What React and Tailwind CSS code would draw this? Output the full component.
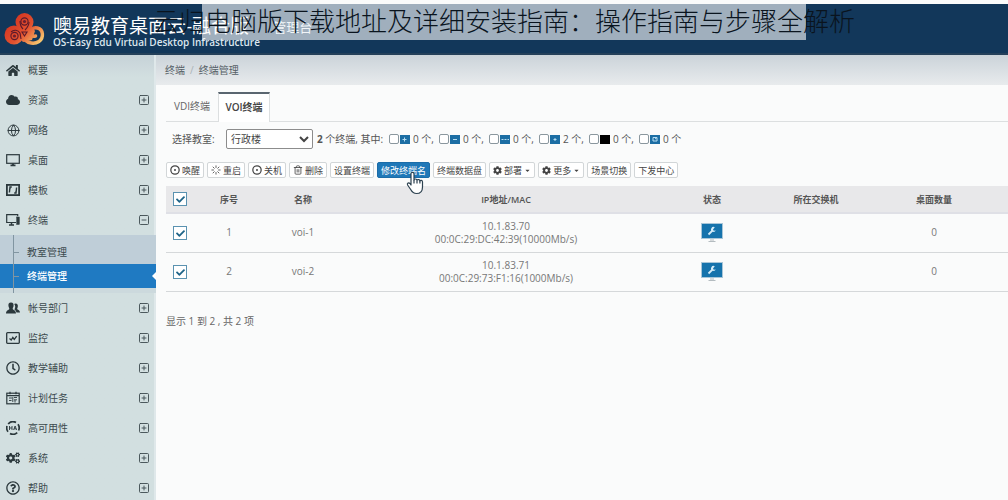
import React, { useState } from "react";
import {
  FaHome,
  FaCloud,
  FaCog,
  FaCogs,
  FaRegClock,
  FaRegQuestionCircle,
  FaCaretDown,
  FaCheck,
} from "react-icons/fa";
import { Globe, Trash2, Loader, CircleDot, SquarePlus, SquareMinus } from "lucide-react";

const cn = (...classes) => classes.filter(Boolean).join(" ");

const DesktopIcon = () => (
  <svg viewBox="0 0 14 14" className="size-3.5" fill="none" stroke="currentColor">
    <rect x="0.7" y="1.7" width="12.6" height="8.6" strokeWidth="1.2" />
    <path d="M4.5 12.3h5M7 10.5v1.5" strokeWidth="1.8" />
  </svg>
);

const TemplateIcon = () => (
  <svg viewBox="0 0 14 14" className="size-3.5" fill="none" stroke="currentColor">
    <rect x="0.9" y="1.9" width="12.2" height="10.2" strokeWidth="1.8" />
    <path d="M5.8 4H4l-.6 5.5M8.2 10H10l.6-5.5M4 4v2M10 10V8" strokeWidth="1.4" />
  </svg>
);

const TerminalIcon = () => (
  <svg viewBox="0 0 14 14" className="size-3.5" fill="none" stroke="currentColor">
    <path d="M10 9.5H0.7V1.7h11v1.5" strokeWidth="1.2" />
    <path d="M3 12h5M5.500 9.500V12" strokeWidth="1.5" />
    <rect x="10.7" y="4" width="2.6" height="7.5" fill="currentColor" strokeWidth="0.5" />
  </svg>
);

const UsersIcon = () => (
  <svg viewBox="0 0 14 14" className="size-3.5" fill="currentColor">
    <path d="M9.5 2.5c2 0 2.6 1.5 2.3 3.300-.2 1-.6 1.5-.6 2.200 0 .8 2.800 1 2.800 3.500h-3.500C10 9.500 8.500 9 8.500 8.300c1-1.500 1-4-.3-5.300.3-.3.700-.5 1.300-.5z" />
    <path d="M5 1.500c2.200 0 2.900 1.700 2.500 3.700-.2 1.200-.8 1.600-.8 2.600 0 1.200 3.300 1.400 3.300 4.700H0c0-3.300 3.300-3.500 3.300-4.700 0-1-.6-1.400-.8-2.600C2.100 3.200 2.800 1.500 5 1.500z" />
  </svg>
);

const MonitorIcon = () => (
  <svg viewBox="0 0 14 14" className="size-3.5" fill="none" stroke="currentColor">
    <rect x="0.7" y="1.7" width="12.6" height="10.6" rx="0.8" strokeWidth="1.3" />
    <path d="M3.500 7.500l1.700 1.500 1.600-2.500 1.500 2 2.400-3.300" strokeWidth="1.3" />
  </svg>
);

const PlanIcon = () => (
  <svg viewBox="0 0 14 14" className="size-3.5" fill="none" stroke="currentColor">
    <rect x="0.8" y="2.2" width="12.4" height="10.6" strokeWidth="1.2" />
    <path d="M1 4.600h12M4 0.700v2.500M10 0.700v2.500" strokeWidth="1.2" />
    <path d="M3 7h3M8 6.500h3M3 9.500h2.500M8 8.800h3M6.800 6v5M9 9v2.500" strokeWidth="0.9" />
  </svg>
);

const HaIcon = () => (
  <svg viewBox="0 0 14 14" className="size-3.5" fill="none" stroke="currentColor">
    <path d="M2.200 3A6.200 6.200 0 0 1 10 1.500M12 3.300a6.200 6.200 0 0 1 .6 6.200M11.200 11.600A6.200 6.200 0 0 1 4 12.500M2 10.700A6.200 6.200 0 0 1 1 5" strokeWidth="1.7" />
    <path d="M3.500 5v4M6 5v4M3.500 7H6M7.600 9l1.500-4 1.500 4M8 7.800h2.200" strokeWidth="0.9" />
  </svg>
);

const menu = [
  { label: "概要", icon: <FaHome size={15} />, leaf: true },
  { label: "资源", icon: <FaCloud size={14} /> },
  { label: "网络", icon: <Globe size={13} strokeWidth={1.8} /> },
  { label: "桌面", icon: <DesktopIcon /> },
  { label: "模板", icon: <TemplateIcon /> },
  { label: "终端", icon: <TerminalIcon />, children: ["教室管理", "终端管理"] },
  { label: "帐号部门", icon: <UsersIcon /> },
  { label: "监控", icon: <MonitorIcon /> },
  { label: "教学辅助", icon: <FaRegClock size={14} /> },
  { label: "计划任务", icon: <PlanIcon /> },
  { label: "高可用性", icon: <HaIcon /> },
  { label: "系统", icon: <FaCogs size={14} /> },
  { label: "帮助", icon: <FaRegQuestionCircle size={14} /> },
];

const filters = [
  { name: "开机", count: 0, mark: "M4.5 2.5v4M2.5 4.5h4" },
  { name: "关机", count: 0, mark: "M3 4.5h4" },
  { name: "登录", count: 0, mark: "M1.5 4.5h2M4.5 4.5h2M7.5 4.5h1.5" },
  { name: "维护", count: 2, mark: "M3.5 4.5h3M5 3v3" },
  { name: "离线", count: 0, mark: "", dark: true },
  { name: "更新", count: 0, mark: "M3 2.5h4v3.500H3zM5 4l2-1.5" },
];

const actions = [
  { label: "唤醒", icon: <CircleDot size={10} strokeWidth={3} /> },
  { label: "重启", icon: <Loader size={10} strokeWidth={2} /> },
  { label: "关机", icon: <CircleDot size={10} strokeWidth={3} /> },
  { label: "删除", icon: <Trash2 size={10} strokeWidth={2} /> },
  { label: "设置终端" },
  { label: "修改终端名", active: true },
  { label: "终端数据盘" },
  { label: "部署", icon: <FaCog size={9} />, caret: true },
  { label: "更多", icon: <FaCog size={9} />, caret: true },
  { label: "场景切换" },
  { label: "下发中心" },
];

const rows = [
  { id: 1, name: "voi-1", ip: "10.1.83.70", mac: "00:0C:29:DC:42:39(10000Mb/s)", desktops: 0 },
  { id: 2, name: "voi-2", ip: "10.1.83.71", mac: "00:0C:29:73:F1:16(1000Mb/s)", desktops: 0 },
];

const Logo = () => (
  <svg viewBox="0 0 42 36" className="h-9 w-[42px] shrink-0" fill="none">
    <defs>
      <linearGradient id="lobe" gradientUnits="userSpaceOnUse" x1="8" y1="4" x2="38" y2="34">
        <stop offset="0" stopColor="#d2301f" />
        <stop offset="0.5" stopColor="#e2512f" />
        <stop offset="1" stopColor="#fbd878" />
      </linearGradient>
    </defs>
    <g fill="url(#lobe)">
      <circle cx="21.500" cy="11" r="9" />
      <circle cx="11" cy="24" r="9.500" />
      <path d="M15 14h13l4 6-3 9-9 2-6-6z" />
    </g>
    {/* right lobe stays open, the stroke curls back to the middle */}
    <path d="M22 29c3 3 9 4.500 14 1.500 5-4 4.500-12-1.500-13.500-5-1-8 2-7 5.500 1 2.500 3 3 5 2.500" stroke="url(#lobe)" strokeWidth="3.500" strokeLinecap="round" />
    <g stroke="#5a1a2c" strokeWidth="1.100">
      <circle cx="21.500" cy="10.500" r="3.600" />
      <circle cx="11.500" cy="25" r="3.600" />
      <path d="M17 10c0 4 1 6 3 8M26 11c0 4-2 6-4 8M8 21c3-3 7-2 9 1l1 6M19 21h5l-2.500 4z" />
    </g>
    <circle cx="21.500" cy="10.500" r="1.600" fill="#6d2030" />
    <circle cx="11.500" cy="25" r="1.600" fill="#6d2030" />
  </svg>
);

const HandCursor = () => (
  <svg viewBox="0 0 18 24" className="pointer-events-none absolute left-7 top-2 z-10 h-6 w-[18px]" fill="#fff" stroke="#2d4250" strokeWidth="1.2" strokeLinejoin="round">
    <path d="M5 14V2.800C5 .8 8 .8 8 2.800V9c.300-1.400 2.800-1.300 3 .3.500-1.200 2.800-1 2.900.6.600-1 2.600-.7 2.600 1v5c0 3.800-2 6.600-6 6.600-3 0-4.500-1.600-5.800-4L1.600 14c-.9-1.700 1.200-2.800 2.300-1.500z" />
    <path d="M8 9v3.500M11 9.500v3M13.900 10v2.500" />
  </svg>
);

const StatusIcon = () => (
  <svg viewBox="0 0 22 20" className="mx-auto block h-5 w-[22px]" role="img" aria-label="维护">
    <rect x="0.5" y="0.5" width="21" height="15" fill="#1673ac" stroke="#a9c6d8" />
    <path d="M7.500 11.500l4-4" stroke="#d5ecf8" strokeWidth="1.8" />
    <path d="M13.800 4.200a2.500 2.500 0 1 0 1 3.300l-2 .2-.8-1.300z" fill="#d5ecf8" />
    <path d="M9 17h4M7.500 18.500h7" stroke="#b4bcc0" />
  </svg>
);

function Check({ label }) {
  const [on, setOn] = useState(true);
  return (
    <label className="relative mx-auto block size-3.5">
      <input
        type="checkbox"
        aria-label={label}
        checked={on}
        onChange={() => setOn(!on)}
        className="block size-3.5 appearance-none border border-[#5a92b0] bg-white"
      />
      {on && <FaCheck size={9} className="pointer-events-none absolute left-[3px] top-[3px] text-[#1f6488]" />}
    </label>
  );
}

function Sidebar() {
  return (
    <nav className="w-[156px] shrink-0 border-r-2 border-[#dfe8ea] bg-[#d2dfe0] bg-linear-to-b from-[#c6d2d8] to-[#d2dfe0] to-5% text-[10px] text-[#3c4a4e]">
      {menu.map((item) => (
        <div key={item.label}>
          <a href="#" className="flex h-[30px] items-center pl-1.5 pr-1">
            <span className="flex w-[22px] items-center text-[#2b383c]">
              <span className="flex w-3.5 justify-center">{item.icon}</span>
            </span>
            <span className="flex-1">{item.label}</span>
            {!item.leaf &&
              (item.children ? <SquareMinus size={12} strokeWidth={1.8} /> : <SquarePlus size={12} strokeWidth={1.8} />)}
          </a>
          {item.children && (
            <div className="relative -mr-0.5 bg-[#bfced8] pt-[5px]">
              {item.children.map((child, i) => (
                <a
                  key={child}
                  href="#"
                  className={cn(
                    "relative flex h-6 items-center pl-[27px]",
                    i === 1 && "bg-[#1f7ac2] font-medium text-white"
                  )}
                >
                  <span className="absolute left-[13px] h-px w-1.5 bg-[#8195a1]" />
                  {child}
                  {i === 1 && (
                    <span className="absolute right-0 border-y-4 border-r-4 border-y-transparent border-r-white" />
                  )}
                </a>
              ))}
              <div className="h-[5px] bg-[#ccd9dd]" />
              <span className="absolute inset-y-0 left-[13px] w-px bg-[#8195a1]" />
            </div>
          )}
        </div>
      ))}
    </nav>
  );
}

export default function App() {
  const [tab, setTab] = useState("VOI终端");

  return (
    <div className="relative flex h-screen flex-col overflow-hidden bg-[#fafbfb] font-['Open_Sans','Noto_Sans_CJK_SC',sans-serif] text-[10px] leading-[13px] text-[#555]">
      {/* Header */}
      <header className="mt-1 flex h-[51px] shrink-0 items-center border-b-2 border-[#24405a] bg-[#12375a] pl-[3px] text-white">
        <Logo />
        <div className="ml-2 pt-[3px]">
          <div className="flex items-center">
            <h1 className="text-[19px] leading-6">噢易教育桌面云-融合版</h1>
            <span className="ml-6 pt-1 text-[13px] text-[#dce6ee]">管理台</span>
          </div>
          <p className="text-[10px] font-semibold leading-[9px] text-[#dce6ee]">OS-Easy Edu Virtual Desktop Infrastructure</p>
        </div>
      </header>

      {/* Caption over the header */}
      <div className="absolute left-1/5 top-1 flex h-9 w-3/5 items-center justify-center bg-white/60">
        <p className="whitespace-nowrap pb-1 font-['Noto_Sans_CJK_SC',sans-serif] text-[26px] font-light leading-8 text-[#0a141e]">
          云归电脑版下载地址及详细安装指南：操作指南与步骤全解析
        </p>
      </div>

      <div className="flex min-h-0 flex-1">
        <Sidebar />

        <main className="min-w-0 flex-1">
          <div className="flex h-[30px] items-center gap-[5px] bg-linear-to-b from-[#cbd3d9] to-[#e8ebed] pl-[9px] text-[#566066]">
            <a href="#">终端</a>
            <span className="text-[#aab2b6]">/</span>
            <span>终端管理</span>
          </div>

          <div className="pl-2.5 pt-[7px]">
            <div className="flex h-[30px] border-b border-[#dcdfe0]">
              {["VDI终端", "VOI终端"].map((t) => (
                <button
                  key={t}
                  onClick={() => setTab(t)}
                  className={cn(
                    "-mb-px w-[52px] pb-0.5",
                    tab === t
                      ? "border-x border-t-2 border-x-[#dcdfe0] border-t-[#5a6670] bg-white font-semibold text-[#444]"
                      : "text-[#666]"
                  )}
                >
                  {t}
                </button>
              ))}
            </div>

            <div className="mt-[7px] flex h-5 items-center pl-1.5">
              <label htmlFor="room" className="w-[54px]">选择教室:</label>
              <select id="room" className="h-5 w-[87px] rounded-xs border border-[#8c8c8c] bg-white text-[10px] text-[#444]">
                <option>行政楼</option>
              </select>
              <span className="ml-1 w-[72px] whitespace-nowrap">
                <b>2</b> 个终端, 其中:
              </span>
              {filters.map((f, i) => (
                <label key={f.name} className="flex w-[50px] items-center whitespace-nowrap">
                  <input type="checkbox" aria-label={f.name} className="size-2.5 appearance-none rounded-xs border border-[#8a979e] bg-white" />
                  <svg viewBox="0 0 10 9" className="ml-px mr-[3px] h-[9px] w-2.5">
                    <rect width="10" height="9" fill={f.dark ? "#000" : "#1c6ea4"} />
                    <path d={f.mark} stroke="#b5dcf2" fill="none" />
                  </svg>
                  {f.count} 个{i < filters.length - 1 && ","}
                </label>
              ))}
            </div>

            {/* Toolbar */}
            <div className="mt-[13px] flex gap-[3px] text-[9px] text-[#444]">
              {actions.map((a) => (
                <button
                  key={a.label}
                  className={cn(
                    "relative flex h-4 items-center gap-0.5 whitespace-nowrap rounded-xs border px-[3px]",
                    a.active ? "border-[#1b6ca8] bg-[#1f78b8] text-white" : "border-[#d2d6d8] bg-white"
                  )}
                >
                  {a.icon}
                  {a.label}
                  {a.caret && <FaCaretDown size={7} />}
                  {a.active && <HandCursor />}
                </button>
              ))}
            </div>

            <table className="mt-2 w-full table-fixed border-collapse text-center">
              <thead>
                <tr className="h-[27px] border-b-2 border-[#dfe0e6] bg-[#e8e8ea] text-[9px] text-[#555]">
                  <th className="w-7"><Check label="全选" /></th>
                  <th className="w-[70px] font-semibold">序号</th>
                  <th className="w-[78px] font-semibold">名称</th>
                  <th className="font-semibold">IP地址/MAC</th>
                  <th className="w-[84px] font-semibold">状态</th>
                  <th className="w-[124px] font-semibold">所在交换机</th>
                  <th className="w-[130px] pr-[18px] font-semibold">桌面数量</th>
                </tr>
              </thead>
              <tbody>
                {rows.map((r) => (
                  <tr key={r.id} className="h-[39px] border-b border-[#d5d8da] text-[#777]">
                    <td><Check label={r.name} /></td>
                    <td>{r.id}</td>
                    <td>{r.name}</td>
                    <td>
                      <p>{r.ip}</p>
                      <p>{r.mac}</p>
                    </td>
                    <td><StatusIcon /></td>
                    <td></td>
                    <td className="pr-[18px]">{r.desktops}</td>
                  </tr>
                ))}
              </tbody>
            </table>

            <p className="mt-[23px] text-[#666]">显示 1 到 2 , 共 2 项</p>
          </div>
        </main>
      </div>
    </div>
  );
}
